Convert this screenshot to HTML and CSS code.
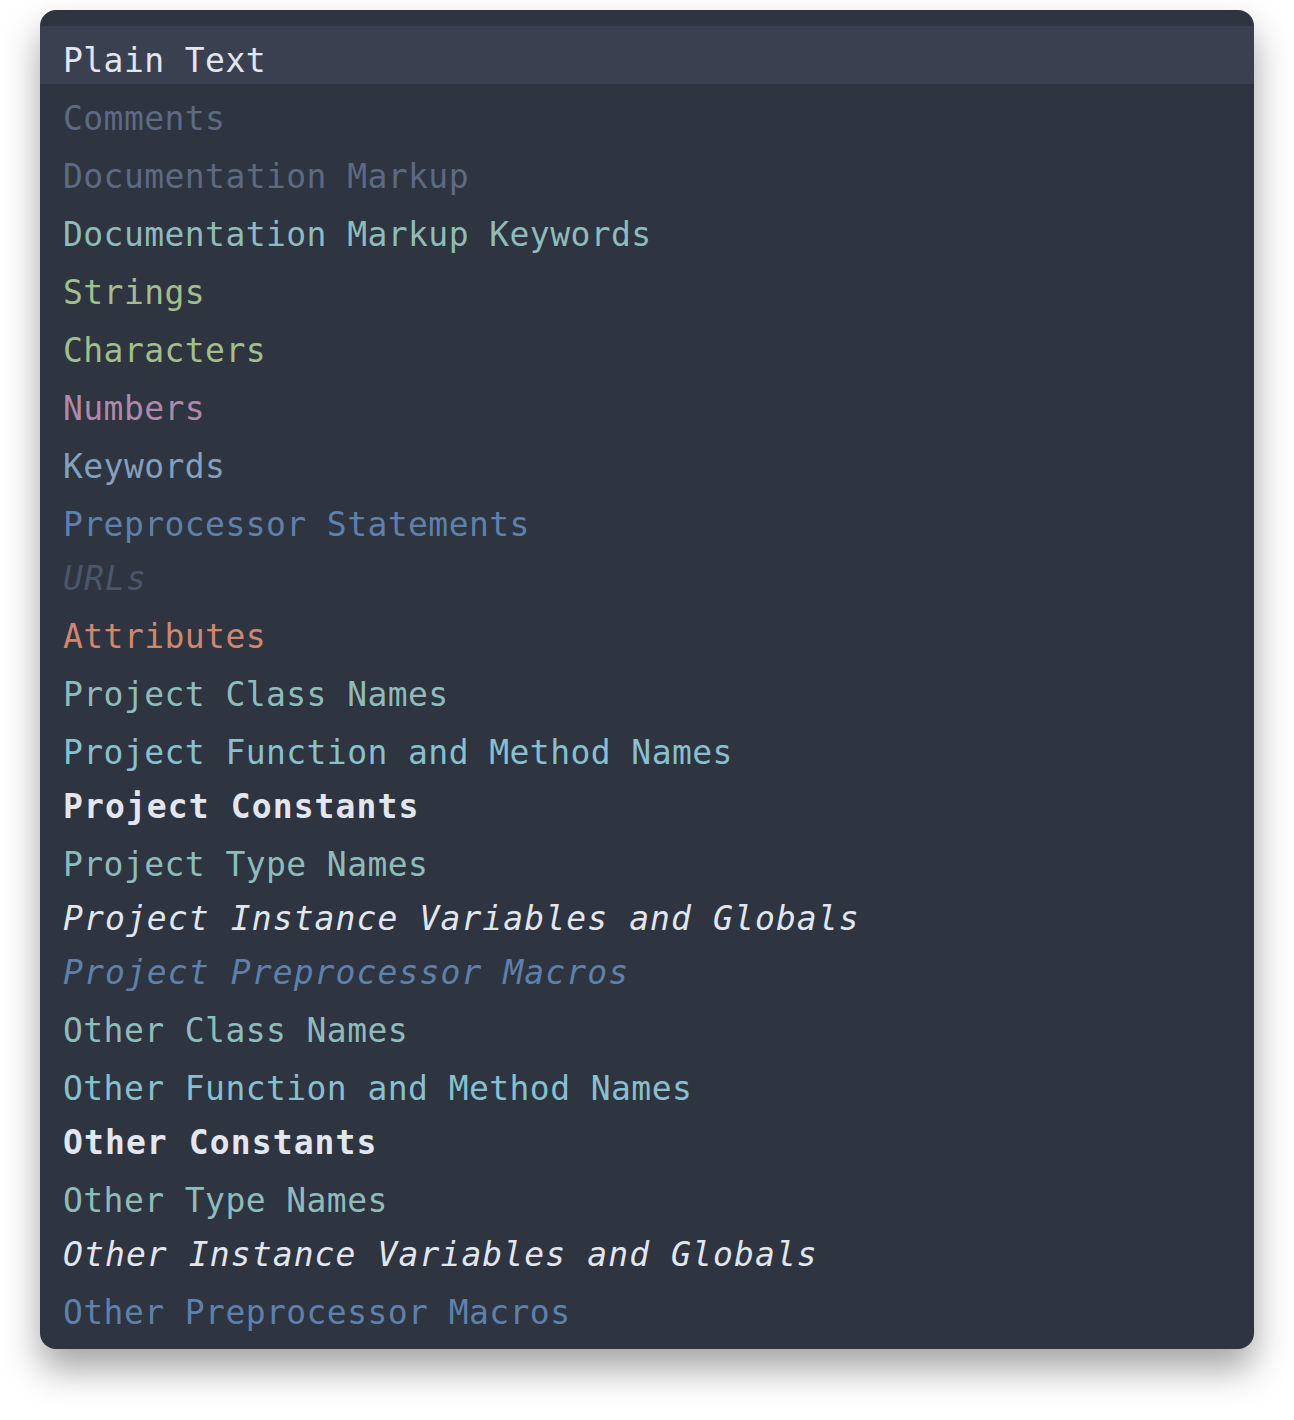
FILE: index.html
```html
<!DOCTYPE html>
<html lang="en">
<head>
<meta charset="utf-8">
<title>Theme Preview</title>
<link rel="stylesheet" href="styles.css">
</head>
<body>
<div class="card">
  <div class="row current plain">Plain Text</div>
  <div class="row comment">Comments</div>
  <div class="row comment">Documentation Markup</div>
  <div class="row teal">Documentation Markup Keywords</div>
  <div class="row green">Strings</div>
  <div class="row green">Characters</div>
  <div class="row purple">Numbers</div>
  <div class="row keyword">Keywords</div>
  <div class="row blue">Preprocessor Statements</div>
  <div class="row url it">URLs</div>
  <div class="row orange">Attributes</div>
  <div class="row teal">Project Class Names</div>
  <div class="row cyan">Project Function and Method Names</div>
  <div class="row plain bd">Project Constants</div>
  <div class="row teal">Project Type Names</div>
  <div class="row plain it">Project Instance Variables and Globals</div>
  <div class="row blue it">Project Preprocessor Macros</div>
  <div class="row teal">Other Class Names</div>
  <div class="row cyan">Other Function and Method Names</div>
  <div class="row plain bd">Other Constants</div>
  <div class="row teal">Other Type Names</div>
  <div class="row plain it">Other Instance Variables and Globals</div>
  <div class="row blue">Other Preprocessor Macros</div>
</div>
</body>
</html>
```

FILE: styles.css
```css
html, body {
  margin: 0;
  padding: 0;
  background: #ffffff;
}

body {
  padding: 10px 40px 71px 40px;
}

.card {
  width: 1214px;
  background: #2e3440;
  border-radius: 16px;
  padding: 16px 0 13px 0;
  box-shadow: 0 20px 36px rgba(0, 0, 0, 0.36);
  overflow: hidden;
  font-family: "DejaVu Sans Mono", "Liberation Mono", monospace;
  font-size: 33px;
  letter-spacing: 0.43px;
}

.row {
  height: 58px;
  box-sizing: border-box;
  padding: 15px 23px 3px 23px;
  line-height: 40px;
  white-space: pre;
}

.row.it,
.row.bd {
  height: 54px;
  padding-top: 11px;
  letter-spacing: 1.1px;
}

.it { font-style: italic; }
.bd { font-weight: bold; }

.current { background: #3b4050; }

.plain   { color: #e2e6ef; }
.comment { color: #5d6a82; }
.teal    { color: #8fbcbb; }
.green   { color: #a3be8c; }
.purple  { color: #b08aa8; }
.keyword { color: #81a1c1; }
.blue    { color: #5e81ac; }
.url     { color: #4c566a; }
.orange  { color: #d08770; }
.cyan    { color: #88c0d0; }
```
